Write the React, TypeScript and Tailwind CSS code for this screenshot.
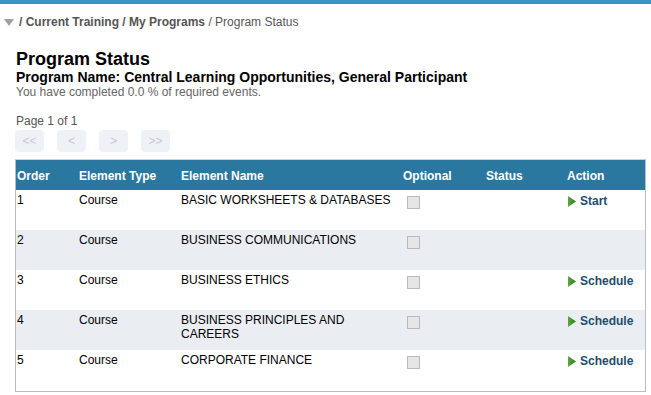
import React from 'react';

interface Row {
  order: number;
  type: string;
  name: string;
  action?: string;
}

const rows: Row[] = [
  { order: 1, type: 'Course', name: 'BASIC WORKSHEETS & DATABASES', action: 'Start' },
  { order: 2, type: 'Course', name: 'BUSINESS COMMUNICATIONS' },
  { order: 3, type: 'Course', name: 'BUSINESS ETHICS', action: 'Schedule' },
  { order: 4, type: 'Course', name: 'BUSINESS PRINCIPLES AND CAREERS', action: 'Schedule' },
  { order: 5, type: 'Course', name: 'CORPORATE FINANCE', action: 'Schedule' },
];

const PlayIcon = () => (
  <svg width="8" height="11" viewBox="0 0 8 11" className="shrink-0">
    <defs>
      <linearGradient id="pg" x1="0" y1="0" x2="1" y2="0">
        <stop offset="0" stopColor="#5aa83e" />
        <stop offset="1" stopColor="#2f7a22" />
      </linearGradient>
    </defs>
    <path d="M0 0 L8 5.5 L0 11 Z" fill="url(#pg)" />
  </svg>
);

const App: React.FC = () => {
  return (
    <div className="w-[651px] h-[395px] bg-white overflow-hidden font-['Liberation_Sans',Arial,sans-serif]">
      <div className="h-[4px] bg-[#3a94c6]" />

      {/* Breadcrumb */}
      <div className="flex items-center h-[34px] pt-[2px] pl-[4px] text-[12px] text-[#555]">
        <svg width="10" height="7" viewBox="0 0 10 7" className="mr-[5px]">
          <path d="M0 0 L10 0 L5 7 Z" fill="#a0a0a0" />
        </svg>
        <span className="font-bold">/ Current Training / My Programs</span>
        <span>&nbsp;/ Program Status</span>
      </div>

      <div className="px-[16px] pt-[11px]">
        <h1 className="text-[18px] leading-[20px] font-bold text-black">Program Status</h1>
        <div className="text-[14px] leading-[16px] font-bold text-black">
          Program Name: Central Learning Opportunities, General Participant
        </div>
        <div className="text-[12px] leading-[15px] text-[#666]">You have completed 0.0 % of required events.</div>

        <div className="mt-[14px] text-[12px] leading-[15px] text-[#555]">Page 1 of 1</div>
      </div>

      <div className="flex pl-[15px] mt-[1px] gap-[13px]">
        {['<<', '<', '>', '>>'].map((b) => (
          <button
            key={b}
            className="w-[29px] h-[22px] rounded-[4px] bg-[#eef2f6] text-[12px] text-[#c3cad2] flex items-center justify-center"
          >
            {b}
          </button>
        ))}
      </div>

      <div className="mt-[7px] ml-[15px] w-[631px] pb-[1px] border border-[#bdbdbd] border-t-[#d0d0d0]">
        <table className="w-full table-fixed border-collapse text-[12px] leading-[14px]">
          <colgroup>
            <col className="w-[61px]" />
            <col className="w-[102px]" />
            <col className="w-[222px]" />
            <col className="w-[83px]" />
            <col className="w-[81px]" />
            <col />
          </colgroup>
          <thead>
            <tr className="bg-[#2a78a0] text-white h-[30px]">
              <th className="text-left font-bold pl-[1px] pt-[1px]">Order</th>
              <th className="text-left font-bold pl-[2px] pt-[1px]">Element Type</th>
              <th className="text-left font-bold pl-[2px] pt-[1px]">Element Name</th>
              <th className="text-left font-bold pl-[2px] pt-[1px]">Optional</th>
              <th className="text-left font-bold pl-[2px] pt-[1px]">Status</th>
              <th className="text-left font-bold pl-[2px] pt-[1px]">Action</th>
            </tr>
          </thead>
          <tbody>
            {rows.map((r, i) => (
              <tr key={r.order} className={`h-[40px] align-top ${i % 2 === 1 ? 'bg-[#eaeef3]' : 'bg-white'}`}>
                <td className="pl-[1px] pt-[3px] text-black">{r.order}</td>
                <td className="pl-[2px] pt-[3px] text-black">{r.type}</td>
                <td className="pl-[2px] pt-[3px] pr-[4px] text-black">{r.name}</td>
                <td className="pl-[6px] pt-[6px]">
                  <div className="w-[13px] h-[13px] bg-[#e6e6e6] border border-[#b9b9b9]" />
                </td>
                <td />
                <td className="pl-[3px] pt-[4px]">
                  {r.action && (
                    <a href="#" className="flex items-center gap-[4px] font-bold text-[#1c4d6e]">
                      <PlayIcon />
                      <span>{r.action}</span>
                    </a>
                  )}
                </td>
              </tr>
            ))}
          </tbody>
        </table>
      </div>
    </div>
  );
};

export default App;
